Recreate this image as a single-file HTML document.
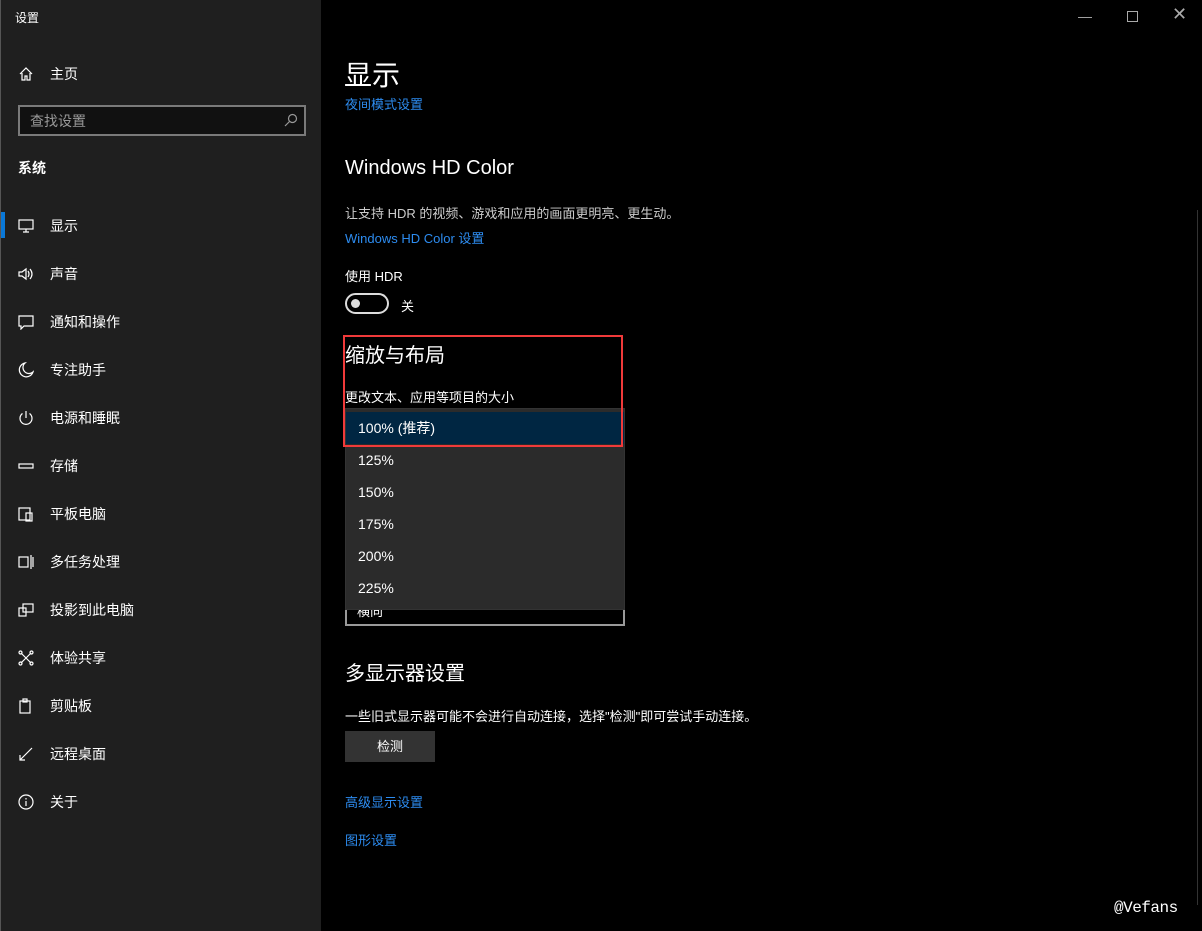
<!DOCTYPE html><html><head><meta charset="utf-8"><style>
*{margin:0;padding:0;box-sizing:border-box}
body{width:1202px;height:931px;background:#000;position:relative;overflow:hidden;font-family:"Liberation Sans","Noto Sans CJK SC",sans-serif;color:#fff;font-size:14px}
.side{position:absolute;left:0;top:0;width:321px;height:931px;background:#1f1f1f;border-left:1px solid #555}
.a{position:absolute;white-space:nowrap}
.nav{position:absolute;left:49px;font-size:14px;margin-top:-1px}
.ic{position:absolute;left:17px;width:16px;height:16px}
.link{color:#2d8cf0}
.dd div{height:32px;line-height:32px;padding-left:12px;font-size:14px}
</style></head><body>
<div class="side">
<div class="a" style="left:14px;top:9px;font-size:12px">设置</div>
<svg class="ic" style="top:66px" viewBox="0 0 16 16" fill="none" stroke="#fff" stroke-width="1.2"><path d="M2 8L8 2l6 6M4 7v7h3v-4h2v4h3V7"/></svg>
<div class="nav" style="top:65px">主页</div>
<div class="a" style="left:17px;top:105px;width:288px;height:31px;border:2px solid #7a7a7a;background:#111"></div>
<div class="a" style="left:29px;top:111px;color:#999">查找设置</div>
<svg class="a" style="left:283px;top:113px" width="14" height="14" viewBox="0 0 14 14" fill="none" stroke="#999" stroke-width="1.2"><circle cx="8.5" cy="5.5" r="4"/><path d="M5.5 8.5L1 13"/></svg>
<div class="a" style="left:17px;top:158px;font-weight:bold">系统</div>
<div class="a" style="left:0;top:212px;width:4px;height:26px;background:#0a78d7"></div>
<svg class="ic" style="top:218px" viewBox="0 0 16 16" fill="none" stroke="#fff" stroke-width="1.2"><rect x="1" y="2" width="14" height="9"/><path d="M8 11v3M5 14h6"/></svg>
<div class="nav" style="top:217px">显示</div>
<svg class="ic" style="top:266px" viewBox="0 0 16 16" fill="none" stroke="#fff" stroke-width="1.2"><path d="M1 6h3l4-3v10l-4-3H1zM10 5q2 3 0 6M12 3q4 5 0 10"/></svg>
<div class="nav" style="top:265px">声音</div>
<svg class="ic" style="top:314px" viewBox="0 0 16 16" fill="none" stroke="#fff" stroke-width="1.2"><path d="M1 2h14v10H6l-3 3v-3H1z"/></svg>
<div class="nav" style="top:313px">通知和操作</div>
<svg class="ic" style="top:362px" viewBox="0 0 16 16" fill="none" stroke="#fff" stroke-width="1.2"><path d="M7 1a7 7 0 1 0 8 9A6 6 0 0 1 7 1z"/></svg>
<div class="nav" style="top:361px">专注助手</div>
<svg class="ic" style="top:410px" viewBox="0 0 16 16" fill="none" stroke="#fff" stroke-width="1.2"><path d="M8 1v7M4.5 3.5a6 6 0 1 0 7 0"/></svg>
<div class="nav" style="top:409px">电源和睡眠</div>
<svg class="ic" style="top:458px" viewBox="0 0 16 16" fill="none" stroke="#fff" stroke-width="1.2"><rect x="1" y="6" width="14" height="4"/></svg>
<div class="nav" style="top:457px">存储</div>
<svg class="ic" style="top:506px" viewBox="0 0 16 16" fill="none" stroke="#fff" stroke-width="1.2"><rect x="1" y="2" width="11" height="12"/><rect x="8" y="7" width="6" height="8"/></svg>
<div class="nav" style="top:505px">平板电脑</div>
<svg class="ic" style="top:554px" viewBox="0 0 16 16" fill="none" stroke="#fff" stroke-width="1.2"><rect x="1" y="3" width="9" height="10"/><path d="M13 1v14M15 3v10"/></svg>
<div class="nav" style="top:553px">多任务处理</div>
<svg class="ic" style="top:602px" viewBox="0 0 16 16" fill="none" stroke="#fff" stroke-width="1.2"><rect x="5" y="2" width="10" height="8"/><rect x="1" y="6" width="7" height="8"/></svg>
<div class="nav" style="top:601px">投影到此电脑</div>
<svg class="ic" style="top:650px" viewBox="0 0 16 16" fill="none" stroke="#fff" stroke-width="1.2"><path d="M3 3l10 10M13 3L3 13"/><circle cx="2.5" cy="2.5" r="1.5"/><circle cx="13.5" cy="2.5" r="1.5"/><circle cx="2.5" cy="13.5" r="1.5"/><circle cx="13.5" cy="13.5" r="1.5"/></svg>
<div class="nav" style="top:649px">体验共享</div>
<svg class="ic" style="top:698px" viewBox="0 0 16 16" fill="none" stroke="#fff" stroke-width="1.2"><rect x="2" y="3" width="10" height="12"/><rect x="5" y="1" width="4" height="3"/></svg>
<div class="nav" style="top:697px">剪贴板</div>
<svg class="ic" style="top:746px" viewBox="0 0 16 16" fill="none" stroke="#fff" stroke-width="1.2"><path d="M2 14L14 2M2 9v5h5"/></svg>
<div class="nav" style="top:745px">远程桌面</div>
<svg class="ic" style="top:794px" viewBox="0 0 16 16" fill="none" stroke="#fff" stroke-width="1.2"><circle cx="8" cy="8" r="7"/><path d="M8 7v5M8 4v1.5"/></svg>
<div class="nav" style="top:793px">关于</div>
</div>
<div class="a" style="left:1078px;top:8px;color:#aaa;font-size:14px">—</div>
<div class="a" style="left:1127px;top:11px;width:11px;height:11px;border:1px solid #aaa"></div>
<div class="a" style="left:1172px;top:4px;color:#aaa;font-size:18px">✕</div>
<div class="a" style="left:1197px;top:210px;width:1px;height:695px;background:#333"></div>
<div class="a" style="left:344px;top:54px;font-size:28px">显示</div>
<div class="a link" style="left:345px;top:94px;font-size:13px">夜间模式设置</div>
<div class="a" style="left:345px;top:157px;font-size:20px">Windows HD Color</div>
<div class="a" style="left:345px;top:203px;font-size:13px;color:#ccc">让支持 HDR 的视频、游戏和应用的画面更明亮、更生动。</div>
<div class="a link" style="left:345px;top:228px;font-size:13px">Windows HD Color 设置</div>
<div class="a" style="left:345px;top:266px;font-size:13px">使用 HDR</div>
<div class="a" style="left:345px;top:293px;width:44px;height:21px;border:2px solid #ddd;border-radius:11px"></div>
<div class="a" style="left:351px;top:299px;width:9px;height:9px;border-radius:50%;background:#ddd"></div>
<div class="a" style="left:401px;top:296px;font-size:13px">关</div>
<div class="a" style="left:345px;top:339px;font-size:20px">缩放与布局</div>
<div class="a" style="left:345px;top:387px;font-size:13px">更改文本、应用等项目的大小</div>
<div class="a" style="left:345px;top:595px;width:280px;height:31px;border:2px solid #999"></div>
<div class="a" style="left:357px;top:601px;font-size:13px">横向</div>
<div class="a dd" style="left:345px;top:408px;width:280px;height:202px;background:#2b2b2b;padding-top:3px;border:1px solid #333">
<div style="background:#002642">100% (推荐)</div><div>125%</div><div>150%</div><div>175%</div><div>200%</div><div>225%</div></div>
<div class="a" style="left:343px;top:335px;width:280px;height:112px;border:2px solid #f03a3a"></div>
<div class="a" style="left:345px;top:657px;font-size:20px">多显示器设置</div>
<div class="a" style="left:345px;top:706px;font-size:13px">一些旧式显示器可能不会进行自动连接，选择"检测"即可尝试手动连接。</div>
<div class="a" style="left:345px;top:731px;width:90px;height:31px;background:#333;text-align:center;line-height:31px;font-size:13px">检测</div>
<div class="a link" style="left:345px;top:792px;font-size:13px">高级显示设置</div>
<div class="a link" style="left:345px;top:830px;font-size:13px">图形设置</div>
<div class="a" style="left:1114px;top:899px;font-size:16px;font-family:'Liberation Mono',monospace;letter-spacing:-0.5px">@Vefans</div>
</body></html>
